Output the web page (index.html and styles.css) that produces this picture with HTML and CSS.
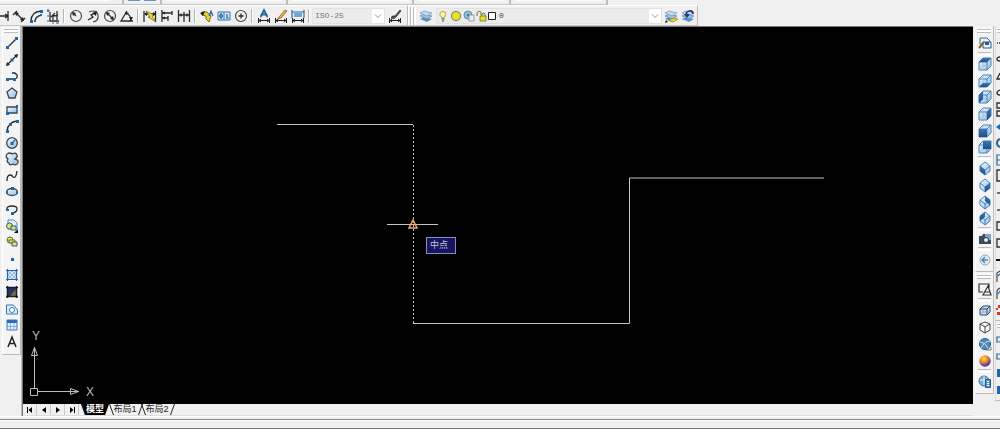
FILE: index.html
```html
<!DOCTYPE html>
<html lang="zh-CN">
<head>
<meta charset="utf-8">
<title>CAD</title>
<link rel="stylesheet" href="styles.css">
</head>
<body>
<svg class="defs" aria-hidden="true">
  <defs>
    <radialGradient id="ball" cx=".4" cy=".3" r=".8"><stop offset="0" stop-color="#ffe03a"/><stop offset=".4" stop-color="#f08a1c"/><stop offset=".8" stop-color="#4a2cc8"/></radialGradient>
    <linearGradient id="pale" x1="0" y1="0" x2="1" y2="1"><stop offset="0" stop-color="#f4f9fd"/><stop offset="1" stop-color="#94bfe2"/></linearGradient>
    <linearGradient id="blue" x1="0" y1="0" x2="0" y2="1"><stop offset="0" stop-color="#3c78b4"/><stop offset="1" stop-color="#1d4f8c"/></linearGradient>
    <symbol id="cube" viewBox="0 0 16 16"><path d="M2 6l4-4h8v8l-4 4H2z" fill="url(#pale)"/><path d="M2 6l4-4h8v8l-4 4H2zM2 6h8v8M10 6l4-4" fill="none" stroke="#4a82b5"/><path d="M6 2v8h8M6 10l-4 4" fill="none" stroke="#8fb6d8" stroke-width=".7"/></symbol>
    <symbol id="iso" viewBox="0 0 16 16"><path d="M8 2l5 4v5l-5 4-5-4V6z" fill="url(#pale)"/><path d="M8 2l5 4v5l-5 4-5-4V6zM3 6l5 4 5-4M8 10v5" fill="none" stroke="#4a82b5"/></symbol>
    <symbol id="layers" viewBox="0 0 16 16"><path d="M2 11l4-2 8 2-5 3z" fill="#5f8fbf"/><path d="M2 8l4-2 8 2-5 3z" fill="#a3c3e0" stroke="#4f81b3" stroke-width=".7"/><path d="M2 5l4-2 8 2-5 3z" fill="#c3d9ec" stroke="#6b98c4" stroke-width=".7"/></symbol>
    <symbol id="dimbar" viewBox="0 0 16 16"><path d="M2.500 10v5M13.500 10v5M3 12.500h10M5 11l-2 1.500L5 14M11 11l2 1.500-2 1.500" fill="none" stroke="#222"/></symbol>
  </defs>
</svg>

<header class="top">
  <div class="upper-row">
    <div class="upper-bar upper-a"><span class="stub"></span></div>
    <div class="upper-bar upper-b"><span class="stub-icons"></span></div>
    <div class="upper-bar upper-c"><span class="stub"></span></div>
    <div class="upper-bar upper-c"><span class="stub"></span></div>
    <div class="upper-bar upper-d"><span class="stub"></span></div>
    <div class="upper-bar upper-d"><span class="stub"></span></div>
  </div>
  <div class="tool-row">
    <div class="hbar dim-bar" role="toolbar" aria-label="标注">
      <button class="tool first" aria-label="线性"><svg viewBox="0 0 16 16"><path d="M4 8h9M14 3v10M11 6l3 2-3 2" class="k"/></svg></button>
      <button class="tool" aria-label="对齐"><svg viewBox="0 0 16 16"><path d="M2 7l4-4M10 14l4-4M5 5l7 7" class="k"/><path d="M4 4l4 1-3 3zM13 13l-4-1 3-3z" fill="#222"/></svg></button>
      <button class="tool" aria-label="弧长"><svg viewBox="0 0 16 16"><path d="M3 13Q3 4 13 3M7 14Q7 8 14 7" class="k"/><path d="M2 12h3v3H2zM12 2h3v3h-3zM6 12h2v2H6zM12 6h2v2h-2z" class="b"/></svg></button>
      <button class="tool" aria-label="坐标"><svg viewBox="0 0 16 16"><path d="M5 4v9h9M6 9l4-4M12 3v9M8 12V8l5-1" class="k"/><path d="M2 3h3M3 1v3M2 8h2M2 13h2M7 15h2M11 15h3" class="bs"/></svg></button>
      <i class="vsep"></i>
      <button class="tool" aria-label="半径"><svg viewBox="0 0 16 16"><circle cx="8" cy="8" r="5.500" class="g"/><path d="M8 8L5 5" class="k"/><path d="M4 4l4 1-3 3z" fill="#222"/></svg></button>
      <button class="tool" aria-label="折弯"><svg viewBox="0 0 16 16"><path d="M4 4q8-3 9 3t-5 7" class="g"/><path d="M3 12l5-3-2-2 4-2" class="k"/><path d="M12 3l-1 5-4-3z" fill="#222"/></svg></button>
      <button class="tool" aria-label="直径"><svg viewBox="0 0 16 16"><circle cx="8" cy="8" r="5.500" class="g"/><path d="M5 5l6 6" class="k"/><path d="M4 4l4 1-3 3zM12 12l-4-1 3-3z" fill="#222"/></svg></button>
      <button class="tool" aria-label="角度"><svg viewBox="0 0 16 16"><path d="M14 13H2L8 3M7 5q5 2 5 8" class="k"/><path d="M6 4l4 1-3 2zM10 9h4l-2 4z" fill="#222"/></svg></button>
      <i class="vsep"></i>
      <button class="tool" aria-label="快速标注"><svg viewBox="0 0 16 16"><path d="M2 3v11M13.500 3v11M3 6h10" class="k"/><path d="M4 3l8 4-2 1 4 6-8-5h2z" fill="#f0db27" stroke="#6b6210" stroke-width=".7"/><path d="M2 6l3-2v4zM14 6l-3-2v4z" fill="#222"/></svg></button>
      <button class="tool" aria-label="基线"><svg viewBox="0 0 16 16"><path d="M3 2v12M3 5h10M3 10h6M13 3v4M9 8v5" class="k"/><path d="M3 5l3-1.500v3zM3 10l3-1.500v3z" fill="#222"/></svg></button>
      <button class="tool" aria-label="连续"><svg viewBox="0 0 16 16"><path d="M2.500 2v12M8 4v10M13.500 2v12M3 7h10" class="k"/><path d="M5 5.500v3M11 5.500v3" class="k"/></svg></button>
      <i class="vsep"></i>
      <button class="tool" aria-label="引线"><svg viewBox="0 0 16 16"><path d="M3 4l5 0 4 4-2 6-3-3 0-3-4-1z" fill="#e8d52a" stroke="#59520f" stroke-width=".8"/><path d="M1 5l5-2-2 5z" fill="#222"/><path d="M10 8l2-5 2 5M11 6h2" class="bs"/></svg></button>
      <button class="tool" aria-label="公差"><svg viewBox="0 0 16 16"><path d="M2 4h12v8H2zM8 4v8" fill="#dcebf8" stroke="#3672ad"/><circle cx="5" cy="8" r="1.500" class="bs"/><path d="M11 6v4M10 10h3M5 5v6" class="bs"/></svg></button>
      <button class="tool" aria-label="圆心标记"><svg viewBox="0 0 16 16"><circle cx="8" cy="8" r="5.500" class="g"/><path d="M8 5.500v5M5.500 8h5" class="k"/></svg></button>
      <i class="vsep"></i>
      <button class="tool" aria-label="编辑标注"><svg viewBox="0 0 16 16"><path d="M4.500 9L8 2l3.500 7M6 6.500h4" fill="none" stroke="#2465a5" stroke-width="1.800"/><use href="#dimbar"/></svg></button>
      <button class="tool" aria-label="编辑标注文字"><svg viewBox="0 0 16 16"><path d="M6 9l6-7 2 1-6 7-3 1z" fill="#efb23a" stroke="#7d4d17" stroke-width=".7"/><use href="#dimbar"/></svg></button>
      <button class="tool" aria-label="标注更新"><svg viewBox="0 0 16 16"><path d="M2 2v8M14 2v8M2 4h12" class="bs"/><path d="M4 5h8v4H4z" fill="#72a5d3"/><use href="#dimbar"/></svg></button>
      <i class="vsep"></i>
      <label class="combo style-combo"><select aria-label="标注样式"><option>ISO-25</option></select><svg class="chev" viewBox="0 0 8 6"><path d="M1 1.500l3 3 3-3"/></svg></label>
      <button class="tool wide" aria-label="标注样式管理"><svg viewBox="0 0 16 16"><path d="M4 10q1-3 4-2l5-6 1 1-5 6q-2 3-5 1z" fill="#555" stroke="#222" stroke-width=".7"/><use href="#dimbar"/></svg></button>
    </div>
    <div class="hbar layer-bar" role="toolbar" aria-label="图层">
      <span class="vgrip"></span>
      <button class="tool wide" aria-label="图层特性"><svg viewBox="0 0 16 16"><use href="#layers"/></svg></button>
      <label class="combo layer-combo">
        <svg viewBox="0 0 60 14" class="state"><path d="M5 9Q2 6 3 4q2-3 5-1 2 2-1 6z" fill="#fff5a0" stroke="#9a8b2c" stroke-width=".8"/><path d="M4.500 10h3M5 12h2" class="g"/>
        <path d="M14 2h10v10H14z" fill="#dfe6a0"/><circle cx="19" cy="7" r="4.500" fill="#f4df28" stroke="#5c7f90"/>
        <circle cx="31" cy="6" r="4" fill="#9fbdd6" stroke="#68899f"/><path d="M32 6h5v6h-5z" fill="#e6eef4" stroke="#6f8fac" stroke-width=".8"/><circle cx="31" cy="6" r="1.500" fill="#4f82ac"/>
        <path d="M40 7V4q1-3 4-1v3M45 7V5q2-2 3 0v2" fill="none" stroke="#77711b"/><path d="M43 7h6v5h-6z" fill="#e8dc31" stroke="#77711b" stroke-width=".8"/>
        <path d="M51.500 3.500h7v7h-7z" fill="#fff" stroke="#222"/></svg>
        <select aria-label="图层"><option>0</option></select><svg class="chev" viewBox="0 0 8 6"><path d="M1 1.500l3 3 3-3"/></svg></label>
      <button class="tool" aria-label="置为当前"><svg viewBox="0 0 16 16"><use href="#layers"/><path d="M5 12l6-2 4 1-5 3z" fill="#f0d33a" stroke="#8b7a20" stroke-width=".7"/><path d="M2 15l3-1-2-2z" fill="#222"/></svg></button>
      <button class="tool" aria-label="上一个图层"><svg viewBox="0 0 16 16"><use href="#layers"/><path d="M7 8Q5 4 9 3q4-1 4 3" fill="none" stroke="#1f3f72" stroke-width="1.800"/><path d="M4 6l6 0-3 4z" fill="#1f3f72"/></svg></button>
    </div>
  </div>
</header>

<main class="work">
  <aside class="left-dock">
    <div class="vbar draw-bar" role="toolbar" aria-label="绘图">
      <span class="grip"></span>
      <div class="stack">
      <button class="tool" aria-label="直线"><svg viewBox="0 0 16 16"><path d="M4 12l8-8" class="k"/><path d="M2 11h3v3H2zM11 2h3v3h-3z" class="b"/></svg></button>
      <button class="tool" aria-label="构造线"><svg viewBox="0 0 16 16"><path d="M3 13L13 3" class="k"/><path d="M2 14l1-4 3 3zM14 2l-4 1 3 3z" fill="#222"/><path d="M6.500 6.500h3v3h-3z" class="b"/></svg></button>
      <button class="tool" aria-label="多段线"><svg viewBox="0 0 16 16"><path d="M3 11h8q3-1 2-4-1-2-4-2" class="k"/><path d="M2 10h3v3H2zM8 4h3v2H8zM9 10h3v3H9z" class="b"/></svg></button>
      <button class="tool" aria-label="正多边形"><svg viewBox="0 0 16 16"><path d="M8 3l5 4-2 6H5L3 7z" class="shape"/></svg></button>
      <button class="tool" aria-label="矩形"><svg viewBox="0 0 16 16"><path d="M3 5h10v6H3z" class="shape"/><path d="M2 10h3v3H2zM12 3h2v3h-2z" class="b"/></svg></button>
      <button class="tool" aria-label="圆弧"><svg viewBox="0 0 16 16"><path d="M3 13Q4 4 13 3" class="k"/><path d="M2 12h3v3H2zM12 2h3v3h-3zM5 5h3v3H5z" class="b"/></svg></button>
      <button class="tool" aria-label="圆"><svg viewBox="0 0 16 16"><circle cx="8" cy="8" r="5.300" class="shape"/><path d="M6.500 7h3v3h-3z" class="b"/><path d="M8 8l3-3" class="bs"/></svg></button>
      <button class="tool" aria-label="修订云线"><svg viewBox="0 0 16 16"><path d="M4 8Q1 6 3 3q3-2 5 0 4-2 5 1 1 2-2 4 4 1 3 4-2 3-5 1-4 2-4-1-3-1-1-4z" class="shape"/></svg></button>
      <button class="tool" aria-label="样条曲线"><svg viewBox="0 0 16 16"><path d="M3 13q0-6 3-6 2 0 3 2 3 2 4-6" class="k"/></svg></button>
      <button class="tool" aria-label="椭圆"><svg viewBox="0 0 16 16"><ellipse cx="8" cy="8" rx="5.500" ry="3.500" class="shape"/><path d="M2 7h2v3H2zM12 7h2v3h-2zM7 3h3v3H7z" class="b"/></svg></button>
      <button class="tool" aria-label="椭圆弧"><svg viewBox="0 0 16 16"><path d="M3 8q0-3 5-3 5 0 5 3 0 3-4 4" class="k"/><path d="M2 8h3v2H2zM7 11h3v3H7z" class="b"/></svg></button>
      <button class="tool" aria-label="插入块"><svg viewBox="0 0 16 16"><path d="M4 2h6l3 3v6H4z" fill="#e5f0fa" stroke="#548abb"/><circle cx="5.500" cy="8" r="3" fill="#efe158" stroke="#24619b"/><path d="M7 8h5v4H7z" fill="#efe158" stroke="#24619b"/><path d="M14 11v4h-4z" fill="#111"/></svg></button>
      <button class="tool" aria-label="创建块"><svg viewBox="0 0 16 16"><circle cx="6" cy="6" r="3" fill="#efe158" stroke="#536f41"/><path d="M5 6h6v3H5z" fill="#efe158" stroke="#536f41"/><path d="M8 8h5v4H8z" fill="#efe158" stroke="#24619b"/></svg></button>
      <button class="tool" aria-label="点"><svg viewBox="0 0 16 16"><path d="M7 7h3v3H7z" class="b"/></svg></button>
      <button class="tool" aria-label="图案填充"><svg viewBox="0 0 16 16"><path d="M4 4h8v8H4z" fill="#d7e8f6"/><path d="M4 8l4-4M4 12l8-8M8 12l4-4M4 8l4 4M4 4l8 8M8 4l4 4" stroke="#86b1d8" stroke-width=".8"/><path d="M3.500 2v12M12.500 2v12M2 3.500h12M2 12.500h12" class="bs"/></svg></button>
      <button class="tool" aria-label="渐变色"><svg viewBox="0 0 16 16"><path d="M4 4h8v8H4z" fill="#29365c"/><path d="M12 5v7H6z" fill="#786f43"/><path d="M3.500 2v12M12.500 2v12M2 3.500h12M2 12.500h12" stroke="#15202f" stroke-width="1.500"/></svg></button>
      <button class="tool" aria-label="面域"><svg viewBox="0 0 16 16"><path d="M2.500 13V4h7l4 5v4z" fill="#d9e9f6" stroke="#3f78ad"/><circle cx="8" cy="9" r="2.500" fill="#fff" stroke="#3f78ad"/></svg></button>
      <button class="tool" aria-label="表格"><svg viewBox="0 0 16 16"><path d="M3 3h10v10H3z" fill="#e4effa" stroke="#3f7ac0"/><path d="M3 3h10v3H3z" fill="#2f6cc0"/><path d="M3 9.500h10M6.500 6v7M10 6v7" stroke="#6d9ed0" stroke-width=".8"/></svg></button>
      <button class="tool" aria-label="多行文字"><svg viewBox="0 0 16 16"><path d="M4 13L8 3l4 10M5.500 9.500h5" fill="none" stroke="#222" stroke-width="1.500"/></svg></button>
      </div>
    </div>
  </aside>

  <section class="viewport">
    <div class="canvas">
      <svg class="drawing" aria-label="图形">
        <g class="geom"><path d="M254 97.500h136M390 296.500h216.500v-145.500h194.500"/><path d="M390.500 98v199" stroke-dasharray="2 2"/><path d="M364 197.500h51"/></g>
        <path d="M390 193l4 8h-8z" class="snap"/>
        <path class="ucs" d="M7.500 361.500h7v7h-7zM11.500 361V320M15 364.500h41M8.500 328.500l3-8 3 8zM47.500 361.500l8 3-8 3z"/>
        <text x="9" y="313" class="axis">Y</text><text x="63" y="369" class="axis">X</text>
      </svg>
      <div class="tip" role="tooltip">中点</div>
    </div>
    <nav class="tabs" aria-label="布局">
      <button class="nav" aria-label="第一个"><svg viewBox="0 0 8 8"><path d="M1 1h1v6H1zM6 1v6L2.500 4z"/></svg></button>
      <button class="nav" aria-label="上一个"><svg viewBox="0 0 8 8"><path d="M6 1v6L2 4z"/></svg></button>
      <button class="nav" aria-label="下一个"><svg viewBox="0 0 8 8"><path d="M2 1v6l4-3z"/></svg></button>
      <button class="nav" aria-label="最后一个"><svg viewBox="0 0 8 8"><path d="M6 1h1v6H6zM2 1v6l3.500-3z"/></svg></button>
      <button class="tab active">模型</button>
      <button class="tab">布局1</button>
      <button class="tab">布局2</button>
    </nav>
  </section>

  <aside class="right-dock">
    <div class="vbar" role="toolbar" aria-label="视图">
      <span class="grip"></span>
      <div class="stack view-stack">
      <button class="tool" aria-label="命名视图"><svg viewBox="0 0 16 16"><path d="M3 3h7l3 3v3H3z" fill="#e9f2fa" stroke="#3c6c9a"/><path d="M6 7h8v6H6z" fill="#edf5fc" stroke="#245b92"/><path d="M8 7h4v3H8z" fill="#245b92"/><path d="M2 13l5-6" stroke="#9a5c28" stroke-width="2"/></svg></button>
      <i class="hsep"></i>
      <button class="tool" aria-label="俯视"><svg viewBox="0 0 16 16"><use href="#cube"/><path d="M2 6l4-4h8l-4 4z" fill="url(#blue)"/></svg></button>
      <button class="tool" aria-label="仰视"><svg viewBox="0 0 16 16"><use href="#cube"/><path d="M2 14l4-4h8l-4 4z" fill="url(#blue)"/></svg></button>
      <button class="tool" aria-label="左视"><svg viewBox="0 0 16 16"><use href="#cube"/><path d="M2 6l4-4v8l-4 4z" fill="url(#blue)"/></svg></button>
      <button class="tool" aria-label="右视"><svg viewBox="0 0 16 16"><use href="#cube"/><path d="M10 6l4-4v8l-4 4z" fill="url(#blue)"/></svg></button>
      <button class="tool" aria-label="主视"><svg viewBox="0 0 16 16"><use href="#cube"/><path d="M2 6h8v8H2z" fill="url(#blue)"/></svg></button>
      <button class="tool" aria-label="后视"><svg viewBox="0 0 16 16"><use href="#cube"/><path d="M6 2h8v8H6z" fill="url(#blue)"/></svg></button>
      <i class="hsep"></i>
      <button class="tool" aria-label="西南等轴测"><svg viewBox="0 0 16 16"><use href="#iso"/><path d="M3 6l5 4v5l-5-4z" fill="url(#blue)"/></svg></button>
      <button class="tool" aria-label="东南等轴测"><svg viewBox="0 0 16 16"><use href="#iso"/><path d="M8 10l5-4v5l-5 4z" fill="url(#blue)"/></svg></button>
      <button class="tool" aria-label="东北等轴测"><svg viewBox="0 0 16 16"><use href="#iso"/><path d="M8 2l5 4v5L8 7z" fill="url(#blue)"/></svg></button>
      <button class="tool" aria-label="西北等轴测"><svg viewBox="0 0 16 16"><use href="#iso"/><path d="M3 6l5-4v5l-5 4z" fill="url(#blue)"/></svg></button>
      <i class="hsep"></i>
      <button class="tool" aria-label="相机"><svg viewBox="0 0 16 16"><path d="M2 5h3l1-2h4v2h4v8H2z" fill="#414b55"/><path d="M8 3h6v6H8z" fill="#7ba6cc"/><circle cx="9" cy="9" r="2.500" fill="#e7f0f6" stroke="#283949"/></svg></button>
      <i class="hsep"></i>
      <button class="tool" aria-label="上一视图"><svg viewBox="0 0 16 16"><circle cx="8" cy="8" r="5" fill="#e1edf7" stroke="#89adc9"/><path d="M11 8H5M8 5L5 8l3 3" fill="none" stroke="#5684ad" stroke-width="1.500"/></svg></button>
      </div>
    </div>
    <div class="vbar" role="toolbar" aria-label="视觉样式">
      <span class="grip"></span>
      <div class="stack style-stack">
      <button class="tool" aria-label="二维线框"><svg viewBox="0 0 16 16"><path d="M12 7V3H2v8h4M6 14l5-9 3 9zM8 11l5 0" fill="none" stroke="#333" stroke-width="1.200"/></svg></button>
      <i class="hsep"></i>
      <button class="tool" aria-label="三维线框"><svg viewBox="0 0 16 16"><path d="M3 7l3-3h7v6l-3 3H3z" fill="#c9ddf0" stroke="#2d4b6b"/><path d="M3 7h7v6M10 7l3-3" fill="none" stroke="#2d4b6b"/><path d="M6 5v5h6M6 10l-3 3" fill="none" stroke="#7599ba" stroke-width=".7"/></svg></button>
      <button class="tool" aria-label="三维隐藏"><svg viewBox="0 0 16 16"><path d="M3 5l5-2 5 2v6l-5 3-5-3zM3 5l5 3 5-3M8 8v6" fill="#fff" stroke="#444"/></svg></button>
      <button class="tool" aria-label="真实"><svg viewBox="0 0 16 16"><circle cx="8" cy="8" r="5.500" fill="#4f8ab9" stroke="#2b5f91"/><path d="M3 6q5 0 8 6M13 5q-5 0-9 7" fill="none" stroke="#c9e1f2"/><path d="M9 14h5v-3" fill="none" stroke="#678"/></svg></button>
      <button class="tool" aria-label="概念"><svg viewBox="0 0 16 16"><circle cx="8" cy="8" r="5.700" fill="url(#ball)"/></svg></button>
      <i class="hsep"></i>
      <button class="tool" aria-label="管理视觉样式"><svg viewBox="0 0 16 16"><circle cx="7" cy="7" r="5" fill="#7fb0d8" stroke="#3e739f"/><path d="M3 6h7M7 2v9" stroke="#e4f0f8"/><path d="M8.500 5.500h5v8h-5z" fill="#5a92c5" stroke="#245b92"/><path d="M10 7.500h2M10 9.500h2M10 11.500h2" stroke="#fff"/></svg></button>
      </div>
    </div>
  </aside>

  <aside class="edge-dock">
    <div class="edge-bar" role="toolbar" aria-label="修改">
      <span class="grip"></span>
      <div class="stack edge-stack">
      <button class="tool" aria-label="删除"><svg viewBox="0 0 4 16"><path d="M1 8h1M3 8h1" class="k"/></svg></button>
      <button class="tool" aria-label="复制"><svg viewBox="0 0 4 16"><path d="M4 5q-3 0-3 2t3 2" class="k"/></svg></button>
      <button class="tool" aria-label="镜像"><svg viewBox="0 0 4 16"><path d="M4 4l-3 6h3" class="k"/></svg></button>
      <button class="tool" aria-label="偏移"><svg viewBox="0 0 4 16"><path d="M4 5q-3 1-3 3t3 2" class="k"/></svg></button>
      <button class="tool" aria-label="阵列"><svg viewBox="0 0 4 16"><path d="M4 1H1v5h3M4 9H1v5h3" class="k"/></svg></button>
      <button class="tool" aria-label="移动"><svg viewBox="0 0 4 16"><path d="M0 8l4-3v6z" class="b"/></svg></button>
      <button class="tool" aria-label="旋转"><svg viewBox="0 0 4 16"><path d="M4 4Q1 5 1 8t3 4" fill="none" stroke="#2865a3" stroke-width="2"/></svg></button>
      <button class="tool" aria-label="缩放"><svg viewBox="0 0 4 16"><path d="M4 3H1v5h3M4 8H1v5h3" class="bs"/></svg></button>
      <button class="tool" aria-label="拉伸"><svg viewBox="0 0 4 16"><path d="M4 2H1v11h3" class="k"/></svg></button>
      <button class="tool" aria-label="修剪"><svg viewBox="0 0 4 16"><path d="M1 8h3" class="k"/></svg></button>
      <button class="tool" aria-label="延伸"><svg viewBox="0 0 4 16"><path d="M1 8h3" class="k"/></svg></button>
      <button class="tool" aria-label="打断于点"><svg viewBox="0 0 4 16"><path d="M4 4H1v8h3" class="k"/></svg></button>
      <button class="tool" aria-label="打断"><svg viewBox="0 0 4 16"><path d="M4 4H1v8h3" class="k"/></svg></button>
      <button class="tool" aria-label="合并"><svg viewBox="0 0 4 16"><path d="M0 8h4" stroke="#111" stroke-width="2"/></svg></button>
      <button class="tool" aria-label="倒角"><svg viewBox="0 0 4 16"><path d="M1 14V5l3-2" class="g"/><path d="M2 8l2-2" class="bs"/></svg></button>
      <button class="tool" aria-label="圆角"><svg viewBox="0 0 4 16"><path d="M1 14V7q0-3 3-4" class="g"/><path d="M2 9l2-3" class="bs"/></svg></button>
      <button class="tool" aria-label="分解"><svg viewBox="0 0 4 16"><path d="M0 6h2v2H0zM2 3h2v3H2zM1 10h3v3H1z" fill="#d33a25"/></svg></button>
      </div>
    </div>
    <div class="edge-bar" role="toolbar" aria-label="绘图次序">
      <span class="grip"></span>
      <div class="stack order-stack">
      <button class="tool" aria-label="前置"><svg viewBox="0 0 4 16"><path d="M4 6H1v5h3" class="bs"/></svg></button>
      <button class="tool" aria-label="后置"><svg viewBox="0 0 4 16"><path d="M4 6H1v5h3" class="bs"/></svg></button>
      <button class="tool" aria-label="置于对象之上"><svg viewBox="0 0 4 16"><path d="M1 4h3v8H1z" class="b"/></svg></button>
      <button class="tool" aria-label="置于对象之下"><svg viewBox="0 0 4 16"><path d="M1 4h3v8H1z" class="b"/></svg></button>
      </div>
    </div>
  </aside>
</main>
<footer class="command"></footer>
</body>
</html>
```
FILE: styles.css
```css
* { box-sizing: border-box; }
body {
  margin: 0;
  height: 100vh;
  display: flex;
  flex-direction: column;
  overflow: hidden;
  background: #f0f0f0;
  font-family: "Liberation Sans", "Noto Sans CJK SC", sans-serif;
}
.defs { position: absolute; width: 0; height: 0; }
button, select { margin: 0; padding: 0; border: 0; background: none; font: inherit; }
.k { fill: none; stroke: #2b2b2b; stroke-width: 1.3; }
.g { fill: none; stroke: #4a4a4a; stroke-width: 1.2; }
.b { fill: #1c68b0; }
.bs { fill: none; stroke: #2566a8; stroke-width: 1.2; }
.shape { fill: url(#pale); stroke: #3c4650; stroke-width: 1.3; }

/* horizontal toolbars */
.top { flex: none; }
.upper-row { display: flex; height: 5px; }
.upper-bar {
  display: flex;
  height: 5px;
  padding: 0 4px 3px;
  border-right: 2px solid #bdbdbd;
  border-bottom: 1px solid #c4c4c4;
}
.stub { flex: 1; background: #fff; }
.stub-icons { flex: 1; background: repeating-linear-gradient(90deg, #6c93b8 0 12px, #f0f0f0 12px 16px); }
.upper-a { width: 124px; padding-left: 0; padding-right: 12px; }
.upper-b { width: 38px; }
.upper-c { width: 126px; }
.upper-d { width: 97px; }
.tool-row { display: flex; height: 21px; }
.hbar {
  display: flex;
  align-items: center;
  border-top: 1px solid #fff;
  border-right: 1px solid #bbb;
  border-bottom: 1px solid #c4c4c4;
}
.dim-bar { width: 408px; }
.layer-bar { width: 290px; border-left: 1px solid #fff; }
.tool { display: flex; align-items: center; justify-content: center; flex: none; width: 17px; }
.tool svg { flex: none; width: 16px; height: 16px; }
.tool.first { width: 10px; justify-content: flex-end; overflow: hidden; }
.tool.wide { width: 20px; }
.vsep { flex: none; width: 6px; height: 14px; background: linear-gradient(90deg, transparent 2px, #b5b5b5 2px 3px, #fff 3px 4px, transparent 4px); }
.vgrip { width: 6px; height: 18px; margin-left: 1px; background: repeating-linear-gradient(90deg, #bbb 0 1px, #fff 1px 3px); }
.combo { display: flex; align-items: center; height: 16px; background: #ececec; border: 1px solid #e2e2e2; }
.combo select {
  flex: 1;
  min-width: 0;
  appearance: none;
  color: #777;
  font: 8px/14px "Liberation Mono", monospace;
}
.style-combo { width: 73px; padding-left: 2px; }
.layer-combo { width: 226px; }
.state { flex: none; width: 60px; height: 14px; }
.layer-combo select { padding-left: 2px; color: #444; }
.chev { width: 12px; height: 14px; padding: 4px 2px; background: #fff; }
.chev path { fill: none; stroke: #999; }

/* work area */
.work { flex: 1; min-height: 0; display: flex; }
.left-dock { width: 22px; padding-left: 2px; border-right: 1px solid #bbb; }
.vbar { display: flex; flex-direction: column; border-right: 1px solid #bbb; border-bottom: 1px solid #bbb; border-left: 1px solid #fff; }
.draw-bar { width: 19px; padding-bottom: 4px; background: #f4f4f4; }
.grip { display: block; flex: none; height: 7px; margin: 2px 2px 0 1px; background: linear-gradient(#fff 0 1px, #bbb 1px 2px, #fff 2px 4px, #bbb 4px 5px, transparent 5px); }
.stack { display: flex; flex-direction: column; height: 315px; }
.stack .tool { flex: 1; width: 100%; min-height: 0; }
.hsep { flex: none; height: 4px; margin: 0 2px; border-top: 1px solid #bbb; border-bottom: 2px solid #fff; }
.right-dock { width: 19px; margin-left: 2px; }
.right-dock .vbar { background: #f4f4f4; padding-bottom: 3px; }
.right-dock .view-stack { height: 233px; }
.right-dock .style-stack { height: 109px; }
.edge-dock { width: 6px; padding-left: 1px; }
.edge-bar { border-bottom: 1px solid #bbb; border-left: 1px solid #ddd; padding-bottom: 2px; overflow: hidden; }
.edge-bar .grip { margin-right: 0; }
.edge-bar .tool { justify-content: flex-end; }
.edge-bar .tool svg { width: 4px; height: 16px; }
.edge-stack { height: 283px; }
.order-stack { height: 68px; }

/* drawing area */
.viewport { flex: 1; min-width: 0; display: flex; flex-direction: column; border-left: 1px solid #777; }
.canvas { position: relative; flex: 1; background: #000; border-top: 1px solid #777; overflow: hidden; }
.drawing { display: block; width: 100%; height: 100%; }
.geom { fill: none; stroke: #c4c4c4; }
.snap { fill: none; stroke: #f0a860; stroke-width: 1.5; }
.ucs { fill: none; stroke: #bdbdbd; }
.axis { fill: #bbb; font: 12px "Liberation Sans", sans-serif; }
.tip {
  position: absolute;
  left: 403px;
  top: 210px;
  padding: 0 7px 0 3px;
  border: 1px solid #8c8cb4;
  background: #151560;
  color: #c4c4dc;
  font-size: 9px;
  line-height: 15px;
}
.tabs { flex: none; display: flex; height: 12px; border-bottom: 1px solid #ddd; }
.nav { display: flex; align-items: center; justify-content: center; width: 14px; border-right: 1px solid #c8c8c8; }
.nav svg { width: 8px; height: 8px; }
.tab { position: relative; width: 32px; color: #222; font-size: 9px; line-height: 11px; white-space: nowrap; }
.tab::before, .tab::after { content: ""; position: absolute; top: 0; height: 11px; width: 1px; background: #222; }
.tab::before { left: 2px; transform: skewX(20deg); }
.tab::after { right: 0; transform: skewX(-20deg); }
.tab.active { width: 28px; margin-left: 2px; background: #000; color: #fff; font-weight: bold; clip-path: polygon(0 0, 100% 0, 86% 100%, 14% 100%); }
.command { flex: none; height: 13px; border-top: 1px solid #fff; border-bottom: 1px solid #777; background: linear-gradient(#f0f0f0 2px, #888 2px 3px, #fff 3px 4px, #f0f0f0 4px); }
```
